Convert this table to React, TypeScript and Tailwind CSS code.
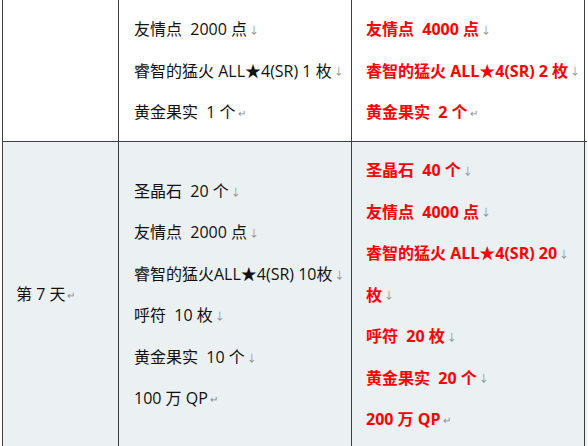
import React from "react";

type Line = { text: string; end?: boolean };

const font = { fontFamily: '"Open Sans", "Noto Sans CJK SC", sans-serif' };

function Mark({ end }: { end?: boolean }) {
  // Word paragraph / line break marks
  return (
    <span className="ml-[2px] align-middle text-[10px] font-normal" style={{ color: "#8a8a8a" }}>
      {end ? "↵" : "↓"}
    </span>
  );
}

function Lines({ lines, red }: { lines: Line[]; red?: boolean }) {
  return (
    <div>
      {lines.map((l, i) => (
        <div key={i} className="h-[41.5px] leading-[41.5px] whitespace-pre">
          <span className={red ? "font-bold text-[#ff0000]" : "text-[#111]"}>{l.text}</span>
          <Mark end={l.end} />
        </div>
      ))}
    </div>
  );
}

const row1Mid: Line[] = [
  { text: "友情点  2000 点" },
  { text: "睿智的猛火 ALL★4(SR) 1 枚" },
  { text: "黄金果实  1 个", end: true },
];

const row1Right: Line[] = [
  { text: "友情点  4000 点" },
  { text: "睿智的猛火 ALL★4(SR) 2 枚" },
  { text: "黄金果实  2 个", end: true },
];

const row2Mid: Line[] = [
  { text: "圣晶石  20 个" },
  { text: "友情点  2000 点" },
  { text: "睿智的猛火ALL★4(SR) 10枚" },
  { text: "呼符  10 枚" },
  { text: "黄金果实  10 个" },
  { text: "100 万 QP", end: true },
];

const row2Right: Line[] = [
  { text: "圣晶石  40 个" },
  { text: "友情点  4000 点" },
  { text: "睿智的猛火 ALL★4(SR) 20" },
  { text: "枚" },
  { text: "呼符  20 枚" },
  { text: "黄金果实  20 个" },
  { text: "200 万 QP", end: true },
];

export default function App() {
  return (
    <div className="h-[446px] w-[588px] overflow-hidden bg-white text-[16px]" style={font}>
      <div className="ml-[2px] w-[585px]">
        {/* first row, cut off at the top */}
        <div className="flex h-[142px] border-b border-[#3f3f3f]">
          <div className="w-[117px] border-x border-[#3f3f3f]" />
          <div className="w-[233px] border-r border-[#3f3f3f] pl-[15px] pt-[9px]">
            <Lines lines={row1Mid} />
          </div>
          <div className="w-[233px] border-r border-[#3f3f3f] pl-[14px] pt-[9px]">
            <Lines lines={row1Right} red />
          </div>
        </div>

        {/* day 7 */}
        <div className="flex bg-[#ebf0f3]">
          <div className="flex w-[117px] items-center border-x border-[#3f3f3f] pl-[13px] pt-[8px] pb-[8px]">
            <div className="leading-[41.5px] text-[#111]">
              第 7 天
              <Mark end />
            </div>
          </div>
          <div className="flex w-[233px] items-center border-r border-[#3f3f3f] pl-[15px] pt-[8px] pb-[8px]">
            <Lines lines={row2Mid} />
          </div>
          <div className="w-[233px] border-r border-[#3f3f3f] pl-[14px] pt-[8px] pb-[8px]">
            <Lines lines={row2Right} red />
          </div>
        </div>
      </div>
    </div>
  );
}
